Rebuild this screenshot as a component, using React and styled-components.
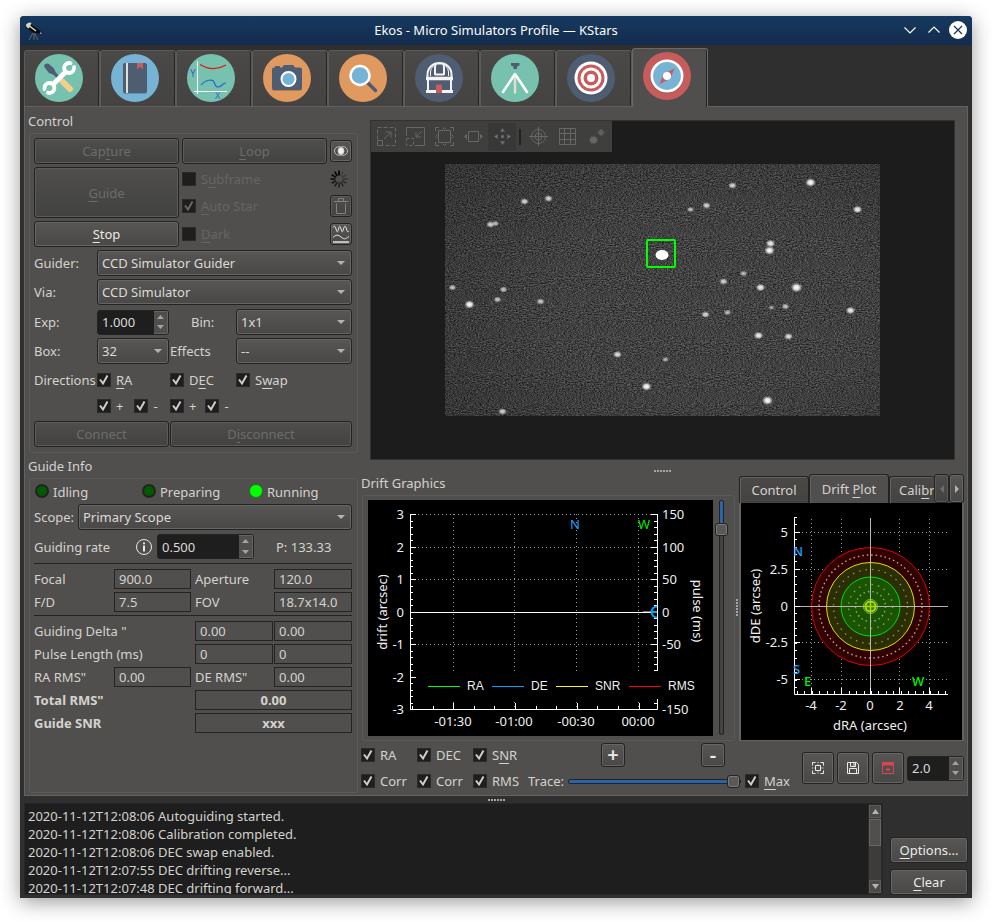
import React from "react";
import styled, { createGlobalStyle, css } from "styled-components";

const Global = createGlobalStyle`
  *, *::before, *::after { box-sizing: border-box; }
  body {
    margin: 0;
    background: #fff;
    font-family: "Noto Sans", "Open Sans", sans-serif;
    font-size: 13px;
    line-height: 18px;
    color: #d4d2cf;
  }
  button, input, select { font: inherit; color: inherit; margin: 0; }
  u { text-underline-offset: 3px; text-decoration-skip-ink: none; }
`;

/* ---------- window frame ---------- */

const Window = styled.main`
  margin: 16px 20px 24px;
  display: flex;
  flex-direction: column;
  background: #2f2f2f;
  border-radius: 4px 4px 0 0;
  box-shadow: 0 4px 20px rgba(0, 0, 0, 0.4);
`;

const TitleBar = styled.header`
  display: grid;
  grid-template-columns: 80px 1fr 80px;
  align-items: center;
  height: 29px;
  padding: 0 5px;
  border-radius: 4px 4px 0 0;
  background: linear-gradient(#17395f, #122c4d);
`;

const Title = styled.h1`
  margin: 0;
  padding-bottom: 2px;
  font-size: 13px;
  font-weight: 400;
  text-align: center;
  color: #fcfcfc;
`;

const WindowActions = styled.div`
  display: flex;
  justify-content: flex-end;
  gap: 6px;
  padding-bottom: 1px;
`;

const BareButton = styled.button`
  display: flex;
  padding: 0;
  border: 0;
  background: none;
`;

const MainTabs = styled.div`
  display: flex;
  align-items: flex-end;
  padding: 4px 4px 0;
  height: 61px;
`;

const MainTab = styled.button`
  display: flex;
  justify-content: center;
  align-items: flex-start;
  width: 76px;
  height: ${(p) => (p.$active ? 59 : 56)}px;
  margin-bottom: ${(p) => (p.$active ? -1 : 0)}px;
  padding: 3px 7px 0 0;
  border: 1px solid ${(p) => (p.$active ? "#6b6a67" : "#5c5b59")};
  border-bottom: 0;
  border-radius: 3px 3px 0 0;
  box-shadow: inset -1px 0 0 #242424;
  background: ${(p) => (p.$active ? "#504f4d" : "linear-gradient(#4a4947, #444341)")};
  z-index: ${(p) => (p.$active ? 1 : 0)};
`;

const Panel = styled.section`
  display: grid;
  grid-template-columns: 330px minmax(0, 1fr);
  column-gap: 3px;
  margin: 0 4px;
  padding: 5px 3px 2px;
  border: 1px solid #63625f;
  background: #504f4d;
`;

const Column = styled.div`
  display: flex;
  flex-direction: column;
  min-width: 0;
`;

const Heading = styled.h2`
  margin: 0 0 3px;
  font-size: 13px;
  font-weight: 400;
  line-height: 18px;
`;

const GroupBox = styled.section`
  display: flex;
  flex-direction: column;
  gap: 3px;
  flex-grow: ${(p) => (p.$grow ? 1 : 0)};
  margin: 0 0 ${(p) => p.$after || 0}px 1px;
  padding: 4px 5px 5px 4px;
  border: 1px solid #5b5a58;
  border-radius: 3px;
`;

/* ---------- controls ---------- */

const raised = css`
  border: 1px solid #232322;
  border-radius: 3px;
  box-shadow: inset 0 0 0 1px #666563;
  background: linear-gradient(#575654, #494846);
`;

const Button = styled.button`
  ${raised}
  display: flex;
  align-items: center;
  justify-content: center;
  height: ${(p) => p.$h || 26}px;
  width: ${(p) => (p.$w ? `${p.$w}px` : "auto")};
  padding: 0;
  font-size: ${(p) => (p.$big ? 20 : 13)}px;
  font-weight: ${(p) => (p.$big ? 600 : 400)};
  color: #eceae7;
  &:disabled {
    color: #6d6c6a;
    background: linear-gradient(#4f4e4c, #424240);
    box-shadow: inset 0 0 0 1px #5b5a58;
  }
`;

const TallButton = styled(Button)`
  grid-row: span 2;
  height: 51px;
`;

const ActionGrid = styled.div`
  display: grid;
  grid-template-columns: 1fr 1fr 22px;
  grid-template-rows: 26px 24px 24px 26px;
  gap: 3px;
  align-items: center;
`;

const CheckLabel = styled.label`
  display: inline-flex;
  align-items: center;
  gap: 5px;
  color: ${(p) => (p.$off ? "#666563" : "inherit")};
  white-space: nowrap;
`;

const CheckFrame = styled.span`
  display: grid;
  flex: none;
  width: 14px;
  height: 14px;
  & > * { grid-area: 1 / 1; }
  & > input {
    appearance: none;
    width: 14px;
    height: 14px;
    border: 1px solid #2a2a29;
    background: #1e1e1e;
  }
  & > svg { pointer-events: none; z-index: 1; }
`;

function Check({ children, on = true, off = false, name }) {
  return (
    <CheckLabel $off={off}>
      <CheckFrame>
        <input type="checkbox" defaultChecked={on} disabled={off} aria-label={name} />
        {on && (
          <svg width="14" height="14" viewBox="0 0 14 14" fill="none" stroke={off ? "#6a6967" : "#d0cecb"} strokeWidth="2">
            <path d="M3 6.5 L6 10.5 L10.5 2.5" />
          </svg>
        )}
      </CheckFrame>
      <span>{children}</span>
    </CheckLabel>
  );
}

const SelectFrame = styled.span`
  display: grid;
  align-items: center;
  flex: ${(p) => (p.$fill ? 1 : "none")};
  min-width: 0;
  & > select {
    ${raised}
    appearance: none;
    grid-area: 1 / 1;
    width: 100%;
    height: 26px;
    padding: 0 16px 0 4px;
    line-height: 18px;
    color: #dcdad7;
  }
  & > svg { grid-area: 1 / 1; justify-self: end; margin-right: 7px; pointer-events: none; }
`;

function Combo({ id, value, fill }) {
  return (
    <SelectFrame $fill={fill}>
      <select id={id} defaultValue={value}>
        <option>{value}</option>
      </select>
      <svg width="8" height="4" viewBox="0 0 8 4"><path d="M0 0H8L4 4Z" fill="#b5b3b0" /></svg>
    </SelectFrame>
  );
}

const SpinFrame = styled.span`
  display: grid;
  grid-template-columns: minmax(0, 1fr) 14px;
  width: ${(p) => p.$w}px;
  height: 25px;
  flex: none;
  border: 1px solid #232322;
  border-radius: 3px;
  overflow: hidden;
  background: #1e1e1e;
  & > input { width: 100%; min-width: 0; padding: 0 4px; border: 0; background: none; color: #dcdad7; }
`;

const SpinButtons = styled.span`
  display: grid;
  grid-template-rows: 1fr 1fr;
  border: 1px solid #666563;
  border-left: 0;
  background: #504f4d;
  & > button { display: flex; align-items: center; justify-content: center; padding: 0; border: 0; background: none; }
`;

function Spin({ id, value, w, label }) {
  return (
    <SpinFrame $w={w}>
      <input id={id} type="text" inputMode="decimal" defaultValue={value} aria-label={label} />
      <SpinButtons>
        <button aria-label="Increase"><svg width="7" height="4"><path d="M0 4H7L3.5 0Z" fill="#a5a3a0" /></svg></button>
        <button aria-label="Decrease"><svg width="7" height="4"><path d="M0 0H7L3.5 4Z" fill="#a5a3a0" /></svg></button>
      </SpinButtons>
    </SpinFrame>
  );
}

const FormRow = styled.div`
  display: flex;
  align-items: center;
  height: 26px;
`;

const FieldLabel = styled.label`
  flex: none;
  width: ${(p) => p.$w}px;
  white-space: nowrap;
`;

const FormGrid = styled.div`
  display: grid;
  grid-template-columns: 62px 72px 65px minmax(0, 1fr);
  grid-template-rows: 28px 30px 27px 25px;
  column-gap: 1px;
  align-items: center;
`;

const CenterLabel = styled.label`
  padding-left: 21px;
`;

const SignPair = styled.div`
  display: flex;
  gap: ${(p) => p.$gap}px;
`;

const ConnectRow = styled.div`
  display: grid;
  grid-template-columns: 135px 1fr;
  gap: 1px;
`;

/* ---------- guide info ---------- */

const StateRow = styled.div`
  display: grid;
  grid-template-columns: repeat(3, 107px);
  height: 18px;
  padding-left: 1px;
`;

const State = styled.span`
  display: flex;
  align-items: center;
  gap: 4px;
  &::before {
    content: "";
    width: 14px;
    height: 14px;
    margin-top: -2px;
    border-radius: 50%;
    border: ${(p) => (p.$lit ? "1px solid #1a7a1a" : "2px solid #222")};
    background: ${(p) => (p.$lit ? "#00ff00" : "#005a00")};
  }
`;

const RateRow = styled.div`
  display: grid;
  grid-template-columns: 102px 21px 119px 1fr;
  align-items: center;
  height: 27px;
`;

const Rule = styled.hr`
  width: 100%;
  margin: 0 0 2px;
  border: 0;
  border-top: 1px solid #232322;
`;

const ValueRows = styled.div`
  display: grid;
  grid-template-columns: 80px 77px 4px 78px 1px 78px;
  grid-auto-rows: 20px;
  row-gap: 3px;
  align-items: center;
`;

const ValueCaption = styled.label`
  grid-column: ${(p) => p.$col};
  white-space: nowrap;
  font-weight: ${(p) => (p.$bold ? 700 : 400)};
`;

const ValueBox = styled.input`
  grid-column: ${(p) => p.$col};
  width: 100%;
  height: 20px;
  padding: 0 4px;
  border: 1px solid #232322;
  background: transparent;
  text-align: ${(p) => (p.$bold ? "center" : "left")};
  && { font-weight: ${(p) => (p.$bold ? 700 : 400)}; }
`;

/* ---------- camera view ---------- */

const Viewer = styled.section`
  display: flex;
  flex-direction: column;
  align-items: flex-start;
  margin: 8px 9px 0;
  height: 340px;
  border: 1px solid #323231;
  background: #1c1c1c;
`;

const Toolbar = styled.div`
  display: flex;
  align-items: center;
  gap: 1px;
  padding: 1px;
  width: 241px;
  height: 31px;
  background: #3f3f3e;
`;

const ToolButton = styled.button`
  display: flex;
  align-items: center;
  justify-content: center;
  width: 28px;
  height: 28px;
  padding: 0;
  border: 0;
  background: ${(p) => (p.$active ? "#383838" : "none")};
`;

const ToolRule = styled.span`
  width: 2px;
  height: 16px;
  margin: 0 2px;
  background: #232322;
`;

const Frame = styled.svg`
  display: block;
  align-self: center;
  margin-top: 12px;
`;

const Grip = styled.div`
  display: flex;
  align-items: ${(p) => p.$align || "center"};
  justify-content: center;
  padding-bottom: ${(p) => (p.$align ? 2 : 0)}px;
  ${(p) => (p.$vertical ? "width: 4px;" : `height: ${p.$h}px;`)}
  &::before {
    content: "";
    ${(p) => (p.$vertical ? "width: 2px; height: 17px;" : "width: 17px; height: 2px;")}
    background: repeating-linear-gradient(${(p) => (p.$vertical ? "180deg" : "90deg")}, #a8a6a4 0 2px, transparent 2px 3px);
  }
`;

const PlotRow = styled.div`
  display: grid;
  grid-template-columns: minmax(0, 1fr) 4px 225px;
`;

const DriftBox = styled.div`
  display: flex;
  gap: 2px;
  margin-left: 1px;
  padding: 4px 6px 4px 5px;
  border: 1px solid #5b5a58;
  border-radius: 3px;
  & > svg { display: block; flex: 1; min-width: 0; }
`;

const thumb = css`
  appearance: none;
  width: 13px;
  height: 13px;
  border: 1px solid #232322;
  border-radius: 3px;
  box-shadow: inset 0 0 0 1px #7a7977;
  background: #5a5957;
`;

const VSlider = styled.input`
  appearance: none;
  writing-mode: vertical-lr;
  width: 13px;
  height: 235px;
  background: none;
  &::-webkit-slider-runnable-track {
    width: 5px;
    border: 1px solid #232322;
    border-radius: 2px;
    background: linear-gradient(#2a64ab 0 12%, #444341 12%);
  }
  &::-webkit-slider-thumb { ${thumb} margin-left: -5px; }
`;

const HSlider = styled.input`
  appearance: none;
  flex: 1;
  min-width: 0;
  height: 13px;
  background: none;
  &::-webkit-slider-runnable-track {
    height: 5px;
    border: 1px solid #232322;
    border-radius: 2px;
    background: #2a64ab;
  }
  &::-webkit-slider-thumb { ${thumb} margin-top: -5px; }
`;

const PlotTabs = styled.div`
  display: flex;
  align-items: flex-end;
  height: 29px;
`;

const PlotTab = styled.button`
  flex: ${(p) => (p.$w ? "none" : 1)};
  width: ${(p) => (p.$w ? `${p.$w}px` : "auto")};
  min-width: 0;
  height: ${(p) => (p.$active ? 29 : 27)}px;
  padding: 0 0 0 ${(p) => (p.$w ? 0 : 9)}px;
  text-align: ${(p) => (p.$w ? "center" : "left")};
  overflow: hidden;
  white-space: nowrap;
  border: 1px solid #232322;
  border-width: 1px ${(p) => (p.$w ? 1 : 0)}px 0 1px;
  border-radius: 3px 3px 0 0;
  box-shadow: inset 1px 1px 0 #63625f;
  background: ${(p) => (p.$active ? "#504f4d" : "linear-gradient(#4a4947, #444341)")};
`;

const ScrollButton = styled(Button)`
  flex: none;
  width: 15px;
  height: 29px;
`;

const PlotBody = styled.div`
  border: 2px solid #63625f;
  border-top-width: 0;
  border-bottom-width: 1px;
  & > svg { display: block; width: 100%; }
`;

const PlotControls = styled.div`
  display: flex;
  align-items: center;
  justify-content: space-between;
  margin-top: 2px;
  height: 50px;
`;

const CurveControls = styled.div`
  display: grid;
  grid-template-columns: 56px 56px 55px 262px;
  grid-template-rows: 26px 26px;
  align-items: center;
`;

const ZoomRow = styled.div`
  display: flex;
  justify-content: space-between;
  padding: 0 65px 0 73px;
`;

const TraceRow = styled.div`
  display: flex;
  align-items: center;
  gap: 4px;
`;

const PlotActions = styled.div`
  display: flex;
  align-items: center;
  gap: 3px;
`;

/* ---------- log ---------- */

const Footer = styled.footer`
  display: grid;
  grid-template-columns: minmax(0, 1fr) 78px;
  gap: 7px;
  padding: 0 4px 3px;
`;

const LogArea = styled.div`
  display: grid;
  grid-template-columns: minmax(0, 1fr) 14px;
  height: 92px;
  border: 1px solid #272727;
  background: #1e1e1e;
`;

const LogText = styled.div`
  overflow: hidden;
  padding: 3px;
  & > p { margin: 0; }
`;

const ScrollBar = styled.div`
  display: flex;
  flex-direction: column;
  border: 1px solid #2a2a29;
  background: #3d3c3b;
`;

const ScrollStep = styled.button`
  display: flex;
  align-items: center;
  justify-content: center;
  height: 13px;
  padding: 0;
  border: 1px solid #5b5a58;
  background: #4b4a48;
`;

const ScrollThumb = styled.div`
  height: 27px;
  margin: 1px 0 auto;
  border: 1px solid #666563;
  background: #504f4d;
`;

const FooterActions = styled.div`
  display: flex;
  flex-direction: column;
  justify-content: flex-end;
  gap: 6px;
`;

/* ---------- drawings ---------- */

const Disc = ({ color, children }) => (
  <svg width="48" height="48" viewBox="0 0 48 48">
    <circle cx="24" cy="24" r="24" fill={color} />
    {children}
  </svg>
);

const NAVY = "#4f5d73";
const RED = "#c75c5c";
const SKY = "#77b3d4";
const TEAL = "#76c2af";
const ORANGE = "#e0995e";

const modules = [
  ["Setup", <Disc color={TEAL}>
    <path d="M9 12.500C9 10 12 8.500 14 10L19 14.500L20.500 18L24 22L22 24L18 20.500L14 19Z" fill={NAVY} />
    <path d="M28 28L35 35" stroke="#f5cf87" strokeWidth="6" strokeLinecap="round" />
    <path d="M17.500 31L31 17.500" stroke="#fff" strokeWidth="5" />
    <path d="M35.500 9.200A5 5 0 1 0 39 13" fill="none" stroke="#fff" strokeWidth="3.800" strokeLinecap="round" />
    <path d="M9.500 35A5 5 0 1 1 13 38.800" fill="none" stroke="#fff" strokeWidth="3.800" strokeLinecap="round" />
  </Disc>],
  ["Scheduler", <Disc color={SKY}>
    <rect x="12" y="10" width="24" height="30" rx="2" fill="#000" opacity=".2" />
    <rect x="12" y="9" width="24" height="30" rx="2" fill={NAVY} />
    <path d="M15 9h2v30h-2z" fill="#e0e0d1" />
    <path d="M26 9h6v6.500l-3-2.500-3 2.500z" fill={RED} />
  </Disc>],
  ["Analyze", <Disc color={TEAL}>
    <g fill="none" strokeWidth="1">
      <path d="M10.500 7V40M7 37.500H40" stroke="#fff" />
      <path d="M13 10.500Q26 18.500 39 11" stroke="#f01010" strokeWidth="1.200" />
      <path d="M14 31C18 26 26 24 27.500 29C29 35 33 33 35 31Q37 29 39 29" stroke="#2f66d0" strokeWidth="1.200" />
    </g>
    <text x="3" y="23" fontSize="10" fill="#2f66d0">Y</text>
    <text x="28" y="45" fontSize="9" fill="#2f66d0">X</text>
  </Disc>],
  ["Capture", <Disc color={ORANGE}>
    <path d="M9 16q0-2 2-2h1v-1.500h5V14h2l2-3h9l2 3h5q2 0 2 2v19q0 2-2 2H11q-2 0-2-2z" fill="#000" opacity=".18" />
    <path d="M9 15.500q0-2 2-2h1V12h5v1.500h2l2-2.500h9l2 2.500h5q2 0 2 2V34q0 2-2 2H11q-2 0-2-2z" fill={NAVY} />
    <circle cx="25.500" cy="25" r="7" fill={SKY} stroke="#fff" strokeWidth="2" />
  </Disc>],
  ["Focus", <Disc color={ORANGE}>
    <path d="M28.500 28.500L36.500 36.500" stroke={NAVY} strokeWidth="3.500" strokeLinecap="round" />
    <circle cx="21" cy="21.500" r="9.500" fill={SKY} stroke="#fff" strokeWidth="2.400" />
  </Disc>],
  ["Observatory", <Disc color={NAVY}>
    <g fill="none" stroke="#f3f3f3" strokeWidth="2">
      <path d="M12.500 23V21C12.500 5 36.500 5 36.500 21V23M20 21V15Q20 10 21.500 9.500M29 21V15Q29 10 27.500 9.500M21 9.500h7M20 20.500h9" />
      <path d="M11 24.500h27" strokeWidth="3.500" />
      <path d="M13 26v12M36 26v12" />
      <path d="M11 37.500h27" strokeWidth="3" />
      <path d="M15.500 22v-4q0-4 3-6M33.500 22v-4q0-4-3-6" strokeWidth="1" />
    </g>
    <path d="M21 30.500h6v8.500h-6z" fill={RED} />
  </Disc>],
  ["Align", <Disc color={TEAL}>
    <path d="M24 24V38.500" stroke="#e0e0d1" strokeWidth="2.500" strokeLinecap="round" />
    <path d="M12 38L24 20L36 38" fill="none" stroke="#fff" strokeWidth="2.600" strokeLinecap="round" strokeLinejoin="round" />
    <path d="M20 9h8.500v2.500l-2.500 1v2.500h-3.500v-2.500l-2.500-1z" fill={NAVY} />
  </Disc>],
  ["Mount", <Disc color={NAVY}>
    <circle cx="24" cy="25" r="16.500" fill="#000" opacity=".2" />
    <circle cx="24" cy="24" r="16.500" fill="#fff" />
    <circle cx="24" cy="24" r="13.500" fill={RED} />
    <circle cx="24" cy="24" r="10.500" fill="#fff" />
    <circle cx="24" cy="24" r="7.500" fill={RED} />
    <circle cx="24" cy="24" r="4" fill="#fff" />
  </Disc>],
  ["Guide", <Disc color={RED}>
    <circle cx="24" cy="25" r="16.500" fill="#000" opacity=".2" />
    <circle cx="24" cy="24" r="15.200" fill={SKY} stroke="#fff" strokeWidth="2.600" />
    <path d="M31.500 16.500L27 27L16.500 32L21 21.500Z" fill={RED} />
    <circle cx="24" cy="24" r="4" fill="#fff" />
  </Disc>],
];

const Telescope = () => (
  <svg width="18" height="20" viewBox="0 0 18 20">
    <path d="M8 12L4 19M9 12V19M9.500 12L13 19" stroke="#777" strokeWidth=".8" />
    <path d="M3 1.500L15.500 10L14.500 12.500L9 12L1 7Z" fill="#0b0b0b" />
    <path d="M4.500 5L11 10" stroke="#ddd" strokeWidth="1.400" />
    <path d="M1 3.500Q4 .5 6.500 2L4 7.500Q1 7 1 3.500Z" fill="#d6d6c8" />
    <path d="M15 12h1v1" stroke="#bbb" />
  </svg>
);

const tools = [
  ["Zoom in", <><path d="M.5 12.500V.5H18.500V18.500H6" strokeDasharray="4 2" /><path d="M.5 13.500h5v5h-5zM7 12L14 5M8.500 5H14V10.500" /></>],
  ["Zoom out", <><path d="M.5 9V.5H18.500V18.500H9M16 4L10 10M10 5V10H15" /><path d="M.5 11.500h7v7h-7z" strokeDasharray="3 2" /></>],
  ["Default zoom", <><path d="M.5 4V.5H4M15 .5H18.500V4M18.500 15V18.500H15M4 18.500H.5V15M3.500 3.500h12v12h-12z" /><path d="M7.500 2.500L9.500 .5L11.500 2.500M7.500 16.500L9.500 18.500L11.500 16.500M2.500 7.500L.5 9.500L2.500 11.500M16.500 7.500L18.500 9.500L16.500 11.500" /></>],
  ["Fit", <><path d="M4.500 4.500h10v10h-10z" /><path d="M2.500 7.500V11.500L.8 9.500ZM16.500 7.500V11.500L18.300 9.500Z" fill="#686765" /></>],
  ["Pan", <><path d="M7.500 4.500H11.500L9.500 1.500ZM7.500 14.500H11.500L9.500 17.500ZM4.500 7.500V11.500L1.500 9.500ZM14.500 7.500V11.500L17.500 9.500Z" fill="#777" strokeWidth=".5" /><path d="M8.500 8.500h2v2h-2z" fill="#777" /></>],
];
const overlays = [
  ["Crosshair", <><circle cx="9.500" cy="9.500" r="7" /><circle cx="9.500" cy="9.500" r="3.500" /><path d="M9.500 0V19M0 9.500H19" /></>],
  ["Grid", <path d="M1.500 1.500h16v16h-16zM6.500 1.500v16M12.500 1.500v16M1.500 6.500h16M1.500 12.500h16" />],
  ["Objects", <><circle cx="6.500" cy="13" r="3" fill="#686765" /><circle cx="6.500" cy="13" r="3.800" strokeDasharray="1 1.500" /><circle cx="14" cy="5.500" r="2" fill="#5e5d5b" /><circle cx="14" cy="5.500" r="3" strokeDasharray="1 1.500" /></>],
];
const ToolIcon = ({ children }) => (
  <svg width="19" height="19" viewBox="0 0 19 19" fill="none" stroke="#686765">{children}</svg>
);

const stars = [
  [79, 37, 3], [103, 34, 3], [45, 60, 3], [50, 59, 2.5], [245, 45, 2.5], [261, 41, 3], [287, 21, 3], [365, 18, 4],
  [412, 45, 3.5], [325, 79, 3.5], [324, 86, 4], [298, 109, 2.5], [278, 117, 3], [315, 123, 3.5], [351, 123, 4.5],
  [260, 150, 3], [282, 148, 2.5], [340, 142, 2.7], [326, 143, 2], [405, 146, 3.5], [313, 171, 3.5], [343, 172, 3.2],
  [7, 123, 2.7], [24, 140, 3.8], [52, 135, 2.7], [58, 125, 2.7], [95, 137, 2.8], [172, 190, 3.2], [220, 195, 2.2],
  [201, 222, 3.8], [322, 236, 4.2], [57, 247, 3],
];

function StarField() {
  return (
    <Frame width="435" height="252" viewBox="0 0 435 252">
      <defs>
        <filter id="noise" x="0" y="0" width="100%" height="100%" colorInterpolationFilters="sRGB">
          <feTurbulence type="fractalNoise" baseFrequency=".63 .97" numOctaves="2" seed="4" />
          <feColorMatrix values=".5 0 0 0 .01  .5 0 0 0 .01  .5 0 0 0 .01  0 0 0 0 1" />
        </filter>
        <radialGradient id="shade" cx=".6" cy=".55" r=".75">
          <stop offset="0" stopColor="#000" stopOpacity="0" />
          <stop offset=".5" stopColor="#000" stopOpacity=".03" />
          <stop offset="1" stopColor="#000" stopOpacity=".2" />
        </radialGradient>
        <radialGradient id="star">
          <stop offset="0" stopColor="#fff" />
          <stop offset=".45" stopColor="#eee" stopOpacity=".9" />
          <stop offset="1" stopColor="#bbb" stopOpacity="0" />
        </radialGradient>
      </defs>
      <rect width="435" height="252" filter="url(#noise)" />
      <rect width="435" height="252" fill="url(#shade)" />
      {stars.map(([x, y, r]) => (
        <ellipse key={`${x}-${y}`} cx={x + 0.5} cy={y + 0.5} rx={r + 1.5} ry={r + 0.5} fill="url(#star)" opacity={Math.min(1, r / 3.8)} />
      ))}
      <ellipse cx="217" cy="91" rx="6.500" ry="5" fill="#fff" />
      <rect x="202" y="76" width="28" height="27" rx="1" fill="none" stroke="#00ff00" strokeWidth="2" />
    </Frame>
  );
}

const range = (n) => Array.from({ length: n }, (_, i) => i);

function DriftGraph() {
  const xs = [[85, "-01:30"], [146, "-01:00"], [208, "-00:30"], [270, "00:00"]];
  return (
    <svg height="236" viewBox="0 0 345 236" fontSize="13" fill="#eee" preserveAspectRatio="xMinYMin meet">
      <rect width="345" height="236" fill="#000" />
      <g stroke="#999" strokeDasharray="1 3">
        {xs.map(([x]) => <path key={x} d={`M${x}.500 14V209`} />)}
        {[14, 47, 79, 144, 177].map((y) => <path key={y} d={`M42 ${y}.500H289`} />)}
      </g>
      <g stroke="#fff" fill="none">
        <path d="M42.500 14V209.500H289.500V14M42 112.500H289" />
        {range(31).map((i) => {
          const y = Math.round(14 + i * 6.5) + 0.5;
          const n = i % 5 ? 3 : 6;
          return <path key={i} d={`M42 ${y}h${n}M289 ${y}h-${n}`} />;
        })}
        {range(12).map((i) => {
          const x = Math.round(44 + i * 20.6) + 0.5;
          return <path key={i} d={`M${x} 209v-${i % 3 === 2 ? 6 : 3}`} />;
        })}
      </g>
      <path d="M275 111.500H284" stroke="#a06a4a" />
      <path d="M289 106.500A5.500 5.500 0 0 0 289 117.500M284 112H289" fill="none" stroke="#00a8f0" strokeWidth="2" />
      <rect x="50" y="171" width="295" height="28" fill="#000" />
      <g textAnchor="end">
        {["3", "2", "1", "0", "-1", "-2", "-3"].map((t, i) => (
          <text key={t} x="36" y={19 + Math.round(i * 32.5)}>{t}</text>
        ))}
      </g>
      {["150", "100", "50", "0", "-50"].map((t, i) => (
        <text key={t} x="294" y={19 + Math.round(i * 32.5)}>{t}</text>
      ))}
      <text x="294" y="214">-150</text>
      <g textAnchor="middle">
        {xs.map(([x, t]) => <text key={t} x={x} y="226">{t}</text>)}
        <text transform="translate(19 112) rotate(-90)">drift (arcsec)</text>
        <text transform="translate(325 111) rotate(90)">pulse (ms)</text>
        <text x="207" y="29" fill="#1aa0ff">N</text>
        <text x="276" y="29" fill="#00ee00">W</text>
      </g>
      <g fontFamily="Liberation Sans, sans-serif" fontSize="12">
        {[[60, "RA", "#00ff00"], [124, "DE", "#00a0ff"], [188, "SNR", "#ffff00"], [261, "RMS", "#ff0000"]].map(([x, t, c]) => (
          <g key={t}>
            <path d={`M${x} 186.500h32`} stroke={c} />
            <text x={x + 39} y="190">{t}</text>
          </g>
        ))}
      </g>
    </svg>
  );
}

function DriftPlot() {
  const cx = 129.5;
  const cy = 103.5;
  return (
    <svg viewBox="0 0 221 237" fontSize="13" fill="#eee">
      <rect width="221" height="237" fill="#000" />
      <g stroke="#999" strokeDasharray="1 3">
        <path d="M70.500 16V191M100.500 16V191M158.500 16V191M188.500 16V191" />
        <path d="M53 29.500H207M53 66.500H207M53 139.500H207M53 176.500H207" />
      </g>
      <circle cx={cx} cy={cy} r="59" fill="#300000" stroke="#dd0000" />
      <circle cx={cx} cy={cy} r="44" fill="#2a2e00" stroke="#e0e000" />
      <circle cx={cx} cy={cy} r="29.500" fill="#1b5400" stroke="#00e000" />
      <g fill="none" strokeDasharray="1.500 3" strokeWidth="1.400">
        <circle cx={cx} cy={cy} r="51.500" stroke="#c99" />
        <circle cx={cx} cy={cy} r="37" stroke="#8a9450" strokeDasharray="1.500 5" />
        <circle cx={cx} cy={cy} r="22" stroke="#7aa060" strokeDasharray="1.500 5" />
        <circle cx={cx} cy={cy} r="15" stroke="#8aae70" />
      </g>
      <path d="M129.500 15V191M53 103.500H207" stroke="#b5b5b5" />
      <circle cx={cx} cy={cy} r="7" fill="none" stroke="#8fbf50" />
      <circle cx={cx} cy={cy} r="5" fill="#3a7000" stroke="#a8e000" strokeWidth="2" />
      <path d="M125 103.500H134M129.500 99V108" stroke="#a8e000" strokeWidth="1.500" />
      <g stroke="#fff" fill="none">
        <path d="M53.500 14V191.500H207" />
        {range(24).map((i) => <path key={i} d={`M53 ${Math.round(14 + i * 7.4) + 0.5}h3`} />)}
        {range(21).map((i) => <path key={i} d={`M${Math.round(56 + i * 7.4) + 0.5} 191v-3`} />)}
        <path d="M53 29.500h6M53 66.500h6M53 103.500h6M53 139.500h6M53 176.500h6M70.500 191v-6M100.500 191v-6M129.500 191v-6M158.500 191v-6M188.500 191v-6" />
      </g>
      <g textAnchor="end">
        {["5", "2.5", "0", "-2.5", "-5"].map((t, i) => <text key={t} x="47" y={34 + Math.round(i * 36.8)}>{t}</text>)}
      </g>
      <g textAnchor="middle">
        {["-4", "-2", "0", "2", "4"].map((t, i) => <text key={t} x={70 + Math.round(i * 29.5)} y="207">{t}</text>)}
        <text x="129" y="227">dRA (arcsec)</text>
        <text transform="translate(19 103) rotate(-90)">dDE (arcsec)</text>
      </g>
      <g fontWeight="500">
        <text x="52" y="53" fill="#1aa0ff">N</text>
        <text x="52" y="171" fill="#1aa0ff">S</text>
        <text x="63" y="183" fill="#00ee00">E</text>
        <text x="171" y="183" fill="#00ee00">W</text>
      </g>
    </svg>
  );
}

const Spinner = () => (
  <svg width="18" height="18" viewBox="-9 -9 18 18">
    {range(12).map((i) => (
      <path key={i} d="M0 -3.500V-8.500" stroke="#000" strokeWidth="1.700" opacity={1 - i * 0.075} transform={`rotate(${-i * 30})`} />
    ))}
  </svg>
);

/* ---------- sections ---------- */

const ControlBox = () => (
  <GroupBox $after={4} aria-label="Control">
    <ActionGrid>
      <Button disabled><span>Cap<u>t</u>ure</span></Button>
      <Button disabled><span><u>L</u>oop</span></Button>
      <Button $h={22} aria-label="Show in viewer">
        <svg width="14" height="10" viewBox="0 0 14 10" fill="none" stroke="#c8c6c3" strokeWidth=".9">
          <ellipse cx="5" cy="5" rx="4.500" ry="4.300" /><ellipse cx="9" cy="5" rx="4.500" ry="4.300" /><ellipse cx="7" cy="5" rx="3" ry="3.400" fill="#f2f0ed" />
        </svg>
      </Button>
      <TallButton disabled><span><u>G</u>uide</span></TallButton>
      <Check on={false} off>S<u>u</u>bframe</Check>
      <Spinner />
      <Check off><u>A</u>uto Star</Check>
      <Button $h={22} disabled aria-label="Clear calibration">
        <svg width="14" height="16" viewBox="0 0 14 16" fill="none" stroke="#82817f"><path d="M0 3.500H14M4.500 3.500V.5H9.500V3.500M2.500 5.500V15.500H11.500V5.500" /></svg>
      </Button>
      <Button><span><u>S</u>top</span></Button>
      <Check on={false} off><u>D</u>ark</Check>
      <Button $h={22} aria-label="Guide data">
        <svg width="18" height="18" viewBox="0 0 18 18" fill="none" stroke="#e6e4e1">
          <path d="M1 2.500C2 .5 3 .5 4 4S5.500 8 6.500 4S8 .5 9 4S10.500 8 11.500 4S13.500 .5 14.500 4S15.500 7 17 6M1 12.500C4 9.500 6 9.500 9 12S13 14.500 17 11.500" /><path d="M1 17H17" strokeWidth="1.500" />
        </svg>
      </Button>
    </ActionGrid>
    <FormRow><FieldLabel $w={63} htmlFor="guider">Guider:</FieldLabel><Combo id="guider" value="CCD Simulator Guider" fill /></FormRow>
    <FormRow><FieldLabel $w={63} htmlFor="via">Via:</FieldLabel><Combo id="via" value="CCD Simulator" fill /></FormRow>
    <FormGrid>
      <label htmlFor="exp">Exp:</label>
      <Spin id="exp" value="1.000" w={72} />
      <CenterLabel htmlFor="bin">Bin:</CenterLabel>
      <Combo id="bin" value="1x1" />
      <label htmlFor="box">Box:</label>
      <Combo id="box" value="32" />
      <label htmlFor="effects">Effects</label>
      <Combo id="effects" value="--" />
      <span>Directions</span>
      <Check><u>R</u>A</Check>
      <Check>D<u>E</u>C</Check>
      <Check>S<u>w</u>ap</Check>
      <span />
      <SignPair $gap={11}><Check name="RA plus">+</Check><Check name="RA minus">-</Check></SignPair>
      <SignPair $gap={9}><Check name="DEC plus">+</Check><Check name="DEC minus">-</Check></SignPair>
    </FormGrid>
    <ConnectRow>
      <Button disabled>Connect</Button>
      <Button disabled><span>D<u>i</u>sconnect</span></Button>
    </ConnectRow>
  </GroupBox>
);

const Value = ({ id, col, v, bold, label }) => (
  <ValueBox id={id} $col={col} $bold={bold} defaultValue={v} readOnly aria-label={label} />
);

const InfoBox = () => (
  <GroupBox $grow aria-label="Guide Info">
    <StateRow><State>Idling</State><State>Preparing</State><State $lit>Running</State></StateRow>
    <FormRow><FieldLabel $w={44} htmlFor="scope">Scope:</FieldLabel><Combo id="scope" value="Primary Scope" fill /></FormRow>
    <RateRow>
      <label htmlFor="rate">Guiding rate</label>
      <svg width="16" height="16" viewBox="0 0 16 16" fill="none" stroke="#eceae7"><circle cx="8" cy="8" r="7.500" /><path d="M8 6.500V12.500M8 3.500V5.300" strokeWidth="2" /></svg>
      <Spin id="rate" value="0.500" w={97} />
      <span>P: 133.33</span>
    </RateRow>
    <Rule />
    <ValueRows>
      <ValueCaption $col="1" htmlFor="focal">Focal</ValueCaption><Value id="focal" col="2" v="900.0" />
      <ValueCaption $col="4" htmlFor="aperture">Aperture</ValueCaption><Value id="aperture" col="6" v="120.0" />
      <ValueCaption $col="1" htmlFor="fd">F/D</ValueCaption><Value id="fd" col="2" v="7.5" />
      <ValueCaption $col="4" htmlFor="fov">FOV</ValueCaption><Value id="fov" col="6" v="18.7x14.0" />
    </ValueRows>
    <Rule />
    <ValueRows>
      <ValueCaption $col="1 / 4" htmlFor="delta">Guiding Delta "</ValueCaption><Value id="delta" col="4" v="0.00" /><Value col="6" v="0.00" label="Guiding Delta DE" />
      <ValueCaption $col="1 / 4" htmlFor="pulse">Pulse Length (ms)</ValueCaption><Value id="pulse" col="4" v="0" /><Value col="6" v="0" label="Pulse Length DE" />
      <ValueCaption $col="1" htmlFor="rarms">RA RMS"</ValueCaption><Value id="rarms" col="2" v="0.00" />
      <ValueCaption $col="4" htmlFor="derms">DE RMS"</ValueCaption><Value id="derms" col="6" v="0.00" />
      <ValueCaption $bold $col="1 / 4" htmlFor="total">Total RMS"</ValueCaption><Value bold id="total" col="4 / 7" v="0.00" />
      <ValueCaption $bold $col="1 / 4" htmlFor="snr">Guide SNR</ValueCaption><Value bold id="snr" col="4 / 7" v="xxx" />
    </ValueRows>
  </GroupBox>
);

const CameraView = () => (
  <Viewer>
    <Toolbar>
      {tools.map(([name, icon]) => <ToolButton key={name} aria-label={name} $active={name === "Pan"} disabled><ToolIcon>{icon}</ToolIcon></ToolButton>)}
      <ToolRule />
      {overlays.map(([name, icon]) => <ToolButton key={name} aria-label={name} disabled><ToolIcon>{icon}</ToolIcon></ToolButton>)}
    </Toolbar>
    <StarField />
  </Viewer>
);

const Graphs = () => (
  <PlotRow>
    <Column>
      <Heading>Drift Graphics</Heading>
      <DriftBox>
        <DriftGraph />
        <VSlider type="range" defaultValue="10" aria-label="Vertical scale" />
      </DriftBox>
    </Column>
    <Grip $vertical />
    <Column>
      <PlotTabs>
        <PlotTab $w={70}>Control</PlotTab>
        <PlotTab $w={80} $active>Drift <u>P</u>lot</PlotTab>
        <PlotTab aria-label="Calibration">Cali<u>b</u>r</PlotTab>
        <ScrollButton disabled aria-label="Previous tabs"><svg width="4" height="8"><path d="M4 0V8L0 4Z" fill="#6d6c6a" /></svg></ScrollButton>
        <ScrollButton aria-label="Next tabs"><svg width="4" height="8"><path d="M0 0V8L4 4Z" fill="#b5b3b0" /></svg></ScrollButton>
      </PlotTabs>
      <PlotBody><DriftPlot /></PlotBody>
    </Column>
  </PlotRow>
);

const GraphControls = () => (
  <PlotControls>
    <CurveControls>
      <Check>RA</Check><Check>DEC</Check><Check>S<u>N</u>R</Check>
      <ZoomRow><Button $h={24} $w={24} $big>+</Button><Button $h={24} $w={24} $big>-</Button></ZoomRow>
      <Check name="RA corrections">Corr</Check><Check name="DEC corrections">Corr</Check><Check>RMS</Check>
      <TraceRow>
        <label htmlFor="trace">Trace:</label>
        <HSlider id="trace" type="range" defaultValue="100" />
        <Check><u>M</u>ax</Check>
      </TraceRow>
    </CurveControls>
    <PlotActions>
      <Button $h={32} $w={32} aria-label="Autoscale">
        <svg width="14" height="14" viewBox="0 0 14 14" fill="none" stroke="#eceae7">
          <path d="M1.500 4.500V1.500H4.500M9.500 1.500H12.500V4.500M12.500 9.500V12.500H9.500M4.500 12.500H1.500V9.500M4.500 4.500h5v5h-5z" /><path d="M7 1V3.500M7 10.500V13M1 7H3.500M10.500 7H13" strokeDasharray="1 1" />
        </svg>
      </Button>
      <Button $h={32} $w={32} aria-label="Export data">
        <svg width="12" height="12" viewBox="0 0 12 12" fill="none" stroke="#eceae7"><path d="M.5 .5H9.500L11.500 2.500V11.500H.5ZM3.500 .5V4.500H8.500V.5M2.500 11.500V6.500H9.500V11.500M7 1V4" /></svg>
      </Button>
      <Button $h={32} $w={32} aria-label="Clear graph">
        <svg width="12" height="12" viewBox="0 0 12 12" fill="none" stroke="#da4453"><path d="M.5 .5H11.500V11.500H.5Z" /><path d="M0 2H12" strokeWidth="3" /><path d="M4 7.500H8" strokeWidth="2" /></svg>
      </Button>
      <Spin value="2.0" w={57} label="Accuracy" />
    </PlotActions>
  </PlotControls>
);

export default function App() {
  return (
    <>
      <Global />
      <Window>
        <TitleBar>
          <Telescope />
          <Title>Ekos - Micro Simulators Profile — KStars</Title>
          <WindowActions>
            <BareButton aria-label="Minimize"><svg width="18" height="18" fill="none" stroke="#fff"><path d="M3.500 6.500L9 12L14.500 6.500" strokeWidth="1.200" /></svg></BareButton>
            <BareButton aria-label="Maximize"><svg width="18" height="18" fill="none" stroke="#fff"><path d="M3.500 11.500L9 6L14.500 11.500" strokeWidth="1.200" /></svg></BareButton>
            <BareButton aria-label="Close"><svg width="18" height="18"><circle cx="9" cy="9" r="9" fill="#fff" /><path d="M5 5L13 13M13 5L5 13" stroke="#15335a" strokeWidth="1.200" /></svg></BareButton>
          </WindowActions>
        </TitleBar>
        <MainTabs role="tablist">
          {modules.map(([name, icon]) => (
            <MainTab key={name} role="tab" aria-label={name} aria-selected={name === "Guide"} $active={name === "Guide"}>{icon}</MainTab>
          ))}
        </MainTabs>
        <Panel>
          <Column>
            <Heading>Control</Heading>
            <ControlBox />
            <Heading>Guide Info</Heading>
            <InfoBox />
          </Column>
          <Column>
            <CameraView />
            <Grip $h={14} $align="flex-end" />
            <Graphs />
            <GraphControls />
          </Column>
        </Panel>
        <Grip $h={7} />
        <Footer>
          <LogArea>
            <LogText role="log">
              <p>2020-11-12T12:08:06 Autoguiding started.</p>
              <p>2020-11-12T12:08:06 Calibration completed.</p>
              <p>2020-11-12T12:08:06 DEC swap enabled.</p>
              <p>2020-11-12T12:07:55 DEC drifting reverse...</p>
              <p>2020-11-12T12:07:48 DEC drifting forward...</p>
            </LogText>
            <ScrollBar>
              <ScrollStep aria-label="Scroll up"><svg width="7" height="5"><path d="M0 5H7L3.500 0Z" fill="#b5b3b0" /></svg></ScrollStep>
              <ScrollThumb />
              <ScrollStep aria-label="Scroll down"><svg width="7" height="5"><path d="M0 0H7L3.500 5Z" fill="#b5b3b0" /></svg></ScrollStep>
            </ScrollBar>
          </LogArea>
          <FooterActions>
            <Button><span><u>O</u>ptions...</span></Button>
            <Button><span><u>C</u>lear</span></Button>
          </FooterActions>
        </Footer>
      </Window>
    </>
  );
}
